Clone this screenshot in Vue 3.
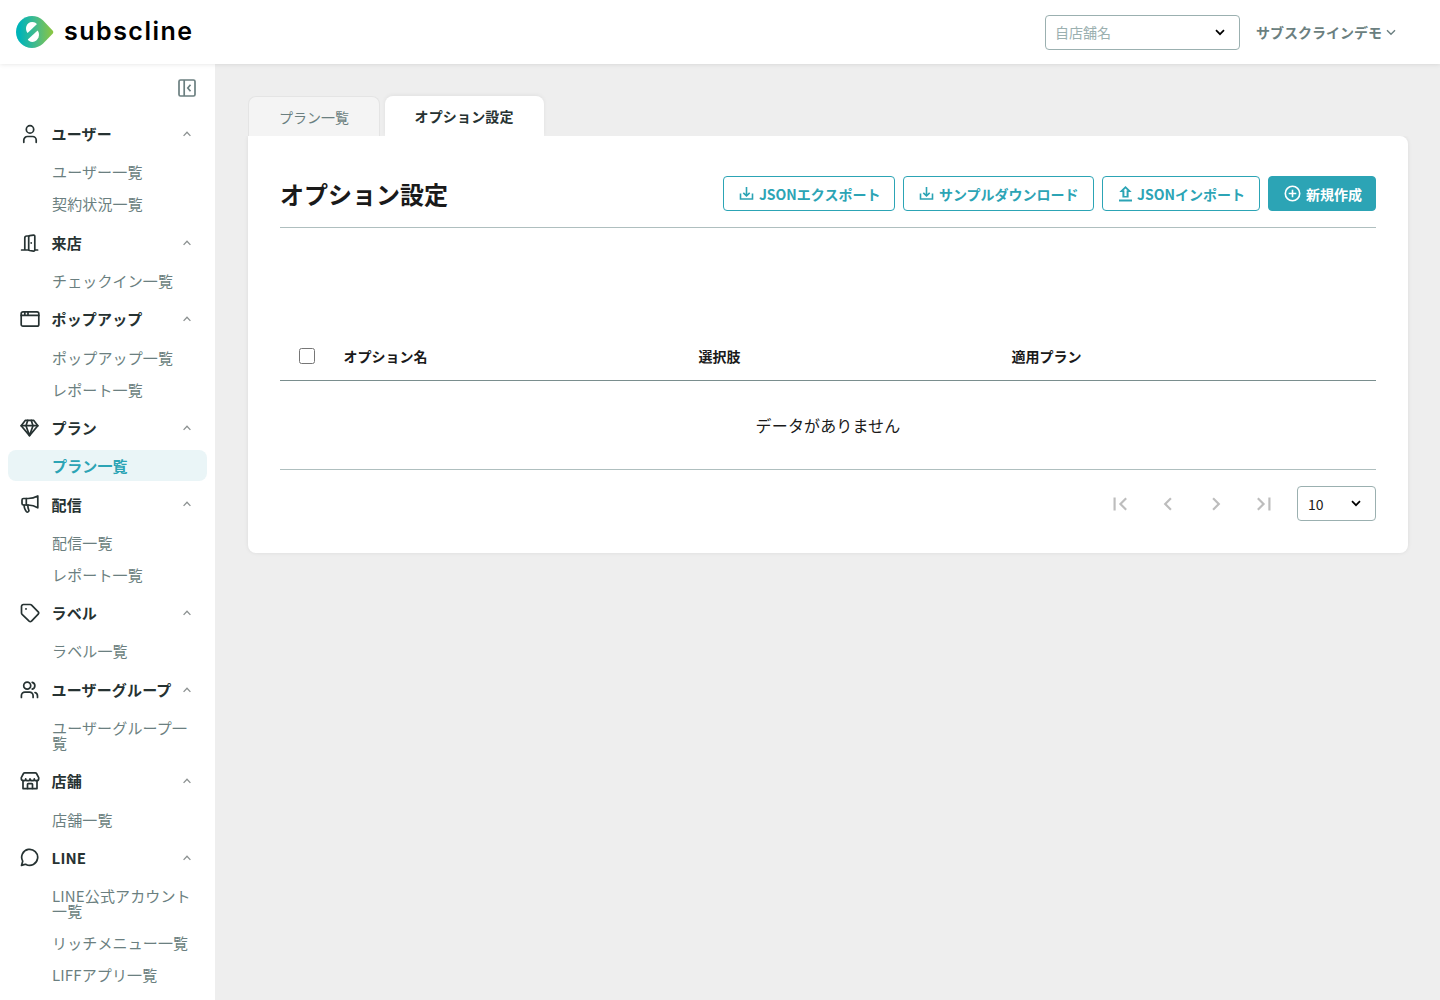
<template>
  <div class="app">
    <header class="header">
      <div class="logo">
        <svg class="logo-mark" width="38" height="32" viewBox="0 0 38 32">
          <defs>
            <linearGradient id="logoGradient" x1="0" y1="0" x2="1" y2="0">
              <stop offset="0.1" stop-color="#00b4b8" />
              <stop offset="0.55" stop-color="#48bb88" />
              <stop offset="1" stop-color="#8cc63f" />
            </linearGradient>
          </defs>
          <path
            d="M16 0C7.2 0 0 7.2 0 16s7.2 16 16 16c4.2 0 8-1.6 10.900-4.200L36.600 17.700c.9-1 .9-2.300 0-3.300L26.900 4.200C24 1.600 20.200 0 16 0z"
            fill="url(#logoGradient)"
          />
          <path d="M11.600 16.900C8.400 13.400 10 6 16.200 6C18.800 6 20.600 7.200 20.800 8.200z" fill="#fff" />
          <path d="M21.600 14.600C24.600 18 22.600 25.900 16.500 25.900C13.900 25.900 12 24.600 11.800 23.500z" fill="#fff" />
        </svg>
        <span class="logo-text">subscline</span>
      </div>
      <div class="header-right">
        <div class="select store-select">
          <span>自店舗名</span>
          <svg width="10" height="7" viewBox="0 0 10 7"><path d="M1 1.200l4 4 4-4" /></svg>
        </div>
        <div class="account">
          <span>サブスクラインデモ</span>
          <svg width="10" height="7" viewBox="0 0 10 7"><path d="M1 1.200l4 4 4-4" /></svg>
        </div>
      </div>
    </header>

    <div class="body">
      <aside class="sidebar">
        <div class="collapse">
          <svg width="18" height="18" viewBox="0 0 18 18">
            <rect x="1" y="1" width="16" height="16" rx="1.500" />
            <path d="M6.200 1v16M12.500 5.800L9.800 9l2.700 3.200" />
          </svg>
        </div>
        <nav>
          <div v-for="group in menus" :key="group.title" class="group">
            <div class="group-title">
              <svg class="group-icon" width="20" height="20" viewBox="0 0 20 20">
                <path v-for="(d, idx) in group.icon" :key="idx" :d="d" />
              </svg>
              <span>{{ group.title }}</span>
              <svg class="chevron" width="8" height="6" viewBox="0 0 8 6"><path d="M.6 4.900L4 1.300l3.400 3.600" /></svg>
            </div>
            <a
              v-for="item in group.items"
              :key="item"
              :class="['group-item', { active: item === current }]"
            >{{ item }}</a>
          </div>
        </nav>
      </aside>

      <main class="main">
        <div class="tabs">
          <div class="tab">プラン一覧</div>
          <div class="tab tab-active">オプション設定</div>
        </div>
        <section class="card">
          <div class="card-head">
            <h1>オプション設定</h1>
            <div class="actions">
              <button class="btn">
                <svg width="18" height="18" viewBox="0 0 18 18"><path :d="downloadIcon" /></svg>
                JSONエクスポート
              </button>
              <button class="btn">
                <svg width="18" height="18" viewBox="0 0 18 18"><path :d="downloadIcon" /></svg>
                サンプルダウンロード
              </button>
              <button class="btn">
                <svg class="upload" width="18" height="18" viewBox="0 0 18 18">
                  <path d="M9.500 1L15.700 7H12.600V12.500H6.400V7H3.300zM9.500 3.600L7.500 5.400H8.400V11H10.600V5.400H11.500zM3 14.500h13v2.100H3z" />
                </svg>
                JSONインポート
              </button>
              <button class="btn btn-primary">
                <svg width="20" height="18" viewBox="0 0 20 18">
                  <circle cx="10.500" cy="8.500" r="7.200" />
                  <path d="M10.500 4.700v7.600M6.700 8.500h7.600" />
                </svg>
                新規作成
              </button>
            </div>
          </div>

          <table>
            <thead>
              <tr>
                <th class="col-check"><input type="checkbox" /></th>
                <th class="col-name">オプション名</th>
                <th class="col-choice">選択肢</th>
                <th>適用プラン</th>
              </tr>
            </thead>
            <tbody>
              <tr>
                <td colspan="4" class="empty">データがありません</td>
              </tr>
            </tbody>
          </table>

          <div class="pager">
            <span v-for="(d, idx) in pagerIcons" :key="idx" class="pager-btn">
              <svg width="26" height="26" viewBox="0 0 24 24"><path :d="d" /></svg>
            </span>
            <div class="select page-size">
              <span>10</span>
              <svg width="10" height="7" viewBox="0 0 10 7"><path d="M1 1.200l4 4 4-4" /></svg>
            </div>
          </div>
        </section>
      </main>
    </div>
  </div>
</template>

<script setup>
import { ref } from 'vue'

const current = ref('プラン一覧')

const menus = [
  {
    title: 'ユーザー',
    icon: ['M10 1.700a3.700 3.700 0 1 0 0 7.400a3.700 3.700 0 0 0 0-7.400z', 'M3.800 18.300v-2.200a3.600 3.600 0 0 1 3.600-3.600h5.200a3.600 3.600 0 0 1 3.600 3.600v2.200'],
    items: ['ユーザー一覧', '契約状況一覧']
  },
  {
    title: '来店',
    icon: ['M1.600 17h7.100M4.800 17V5a2 2 0 0 1 2-2h2', 'M8.700 4v12.500q0 .8.800 1l4 .6q1.300.1 1.300-1V3.200q0-1.300-1.300-1.100l-3.800.5q-1 .2-1 1.400z', 'M14.800 17h2.800', 'M11.200 9.800v.3'],
    items: ['チェックイン一覧']
  },
  {
    title: 'ポップアップ',
    icon: ['M3 2.800h14a1.800 1.800 0 0 1 1.800 1.800v10.800a1.800 1.800 0 0 1-1.800 1.800H3a1.800 1.800 0 0 1-1.800-1.800V4.600A1.800 1.800 0 0 1 3 2.800z', 'M1.200 6.400h17.600M4.800 2.800v3.600M8 2.800v3.600'],
    items: ['ポップアップ一覧', 'レポート一覧']
  },
  {
    title: 'プラン',
    icon: ['M5.200 2.400h8.600l4 5.300-8.300 9.900-8.300-9.900z', 'M1.200 7.700h16.600', 'M7.700 2.400L6 7.700l3.500 9.900L13 7.700l-1.700-5.300'],
    items: ['プラン一覧']
  },
  {
    title: '配信',
    icon: ['M3.500 4.500h4.700C12 4.500 15 3.500 17.800 2v11.800C15 12 12 11 8.200 11H3.500a1.500 1.500 0 0 1-1.500-1.500V6a1.500 1.500 0 0 1 1.500-1.500z', 'M6.300 4.500V11', 'M4 11c.2 2.500 1 4.800 2.300 6.500q1 1 2 .2q1-.9.400-2C8 14.300 7.700 13 8 11'],
    items: ['配信一覧', 'レポート一覧']
  },
  {
    title: 'ラベル',
    icon: ['M1.500 3.400A1.900 1.900 0 0 1 3.400 1.500h6.800q.8 0 1.400.6l6.600 6.700q1 1.200 0 2.400l-6.700 6.900q-1.200 1-2.400 0L2.100 11.400q-.6-.6-.6-1.400z', 'M5.900 5.900h.2'],
    items: ['ラベル一覧']
  },
  {
    title: 'ユーザーグループ',
    icon: ['M7.200 2.200a3.500 3.500 0 1 0 0 7a3.500 3.500 0 0 0 0-7z', 'M1.400 17.500v-1.800a3.500 3.500 0 0 1 3.500-3.500h4.700a3.500 3.500 0 0 1 3.500 3.500v1.800', 'M12.200 2.300a3.500 3.500 0 0 1 0 6.800M15 12.500a3.500 3.500 0 0 1 2.500 3.400v1.600'],
    items: ['ユーザーグループ一覧']
  },
  {
    title: '店舗',
    icon: ['M4.700 1.800h10.600q.8 0 1.200.7l2.200 4.200v1q0 2-2.200 2q-2.200 0-2.200-1.800q0 1.800-2.100 1.800t-2.200-1.800q0 1.800-2.200 1.800T5.700 7.900q0 1.800-2.200 1.800q-2.200 0-2.200-2v-1l2.200-4.200q.4-.7 1.200-.7z', 'M3 9.700v7.900h14V9.700', 'M7.500 17.500v-4.200q0-.7.700-.7h3.600q.7 0 .7.700v4.200'],
    items: ['店舗一覧']
  },
  {
    title: 'LINE',
    icon: ['M1.500 17.400l1.200-4.200a8 8 0 1 1 3.300 3.200q-.6-.2-1.200 0z'],
    items: ['LINE公式アカウント一覧', 'リッチメニュー一覧', 'LIFFアプリ一覧']
  }
]

const downloadIcon = 'M3.500 8.500v5.500h12v-5.500M9.500 2v8.500M6.300 7.800l3.200 3 3.200-3'

// 最初・前・次・最後
const pagerIcons = [
  'M18.410 16.590L13.820 12l4.590-4.590L17 6l-6 6 6 6zM6 6h2v12H6z',
  'M15.410 7.410L14 6l-6 6 6 6 1.410-1.410L10.830 12z',
  'M10 6L8.590 7.410 13.170 12l-4.580 4.590L10 18l6-6z',
  'M5.590 7.410L10.180 12l-4.590 4.590L7 18l6-6-6-6zM16 6h2v12h-2z'
]
</script>

<style>
body {
  margin: 0;
  background: #eee;
}
</style>

<style scoped>
.app {
  height: 1000px;
  overflow: hidden;
  display: flex;
  flex-direction: column;
  font-family: "Noto Sans CJK JP", sans-serif;
  font-size: 14px;
  letter-spacing: 0.01em;
  color: #1a1a1a;
}

svg {
  flex: none;
  fill: none;
}

.header {
  position: relative;
  z-index: 1;
  flex: none;
  box-sizing: border-box;
  height: 64px;
  padding: 0 44px 0 16px;
  display: flex;
  align-items: center;
  justify-content: space-between;
  background: #fff;
  box-shadow: 0 0 5px rgba(0, 0, 0, 0.12);
}

.logo {
  display: flex;
  align-items: center;
  gap: 10px;
}

.logo-text {
  padding-bottom: 2px;
  font-family: Inter, sans-serif;
  font-size: 25px;
  font-weight: 600;
  line-height: 30px;
  letter-spacing: 1.5px;
  color: #000;
}

.header-right {
  display: flex;
  align-items: center;
  gap: 16px;
  letter-spacing: 0;
}

.select {
  box-sizing: border-box;
  height: 35px;
  padding: 0 14px 0 10px;
  display: flex;
  align-items: center;
  justify-content: space-between;
  border: 1px solid #9bb0b0;
  border-radius: 4px;
  background: #fff;
  line-height: 20px;
}

.select svg {
  stroke: #000;
  stroke-width: 1.7;
}

.store-select {
  width: 195px;
  padding-left: 9px;
  color: #9bb0b0;
}

.account {
  display: flex;
  align-items: center;
  gap: 4px;
  font-weight: 700;
  color: #6b7f80;
}

.account svg {
  stroke: #6b7f80;
  stroke-width: 1.4;
}

.body {
  flex: 1;
  display: flex;
  min-height: 0;
}

.sidebar {
  flex: none;
  width: 215px;
  background: #fff;
}

.collapse {
  display: flex;
  justify-content: flex-end;
  padding: 15px 19px 14.400px 0;
}

.collapse svg {
  stroke: #6b7f80;
  stroke-width: 1.7;
}

.group-title {
  height: 44.600px;
  padding: 0 24px 0 20px;
  display: flex;
  align-items: center;
  font-size: 15px;
  font-weight: 700;
  line-height: 15px;
  color: #263232;
}

.group-icon {
  margin: 0.600px 11.600px 0 0;
  stroke: #263232;
  stroke-width: 1.7;
  stroke-linecap: round;
  stroke-linejoin: round;
}

.chevron {
  margin-top: 0.600px;
  margin-left: auto;
  stroke: #8c9191;
  stroke-width: 1.3;
}

.group-item {
  display: block;
  margin: 0 8px 1px;
  padding: 8.500px 8px 7.500px 44px;
  border-radius: 8px;
  font-size: 15px;
  line-height: 15px;
  color: #6b7f80;
}

.group-item.active {
  background: #eaf5f7;
  font-weight: 700;
  color: #2ca4b5;
}

.main {
  flex: 1;
  padding: 32px 32px 0 33px;
}

.tabs {
  display: flex;
  align-items: flex-end;
  gap: 4.600px;
  height: 40px;
}

.tab {
  box-sizing: border-box;
  height: 40px;
  padding: 0 30px;
  border: 1px solid #e4e4e4;
  border-bottom: 0;
  border-radius: 8px 8px 0 0;
  background: #f4f4f4;
  line-height: 41px;
  letter-spacing: 0;
  color: #6b7f80;
}

.tab-active {
  border: 0;
  background: #fff;
  line-height: 40px;
  letter-spacing: 0.01em;
  font-weight: 700;
  color: #263232;
  box-shadow: 0 -1px 4px rgba(0, 0, 0, 0.06);
}

.card {
  box-sizing: border-box;
  height: 417px;
  padding: 40px 32px 0;
  border-radius: 0 8px 8px 8px;
  background: #fff;
  box-shadow: 0 0 4px rgba(0, 0, 0, 0.08);
  clip-path: inset(0 -8px -8px -8px);
}

.card-head {
  display: flex;
  align-items: center;
  justify-content: space-between;
  padding-bottom: 16px;
  border-bottom: 1px solid #afbfbf;
}

h1 {
  margin: 0;
  font-size: 24px;
  line-height: 35px;
  letter-spacing: 0;
}

.actions {
  display: flex;
  gap: 8px;
}

.btn {
  height: 35px;
  padding: 0 14px 0 13px;
  display: flex;
  align-items: center;
  gap: 3.500px;
  border: 1px solid #2ca4b5;
  border-radius: 4px;
  background: #fff;
  font: inherit;
  font-weight: 700;
  letter-spacing: 0;
  white-space: nowrap;
  color: #2ca4b5;
}

.btn svg {
  stroke: currentColor;
  stroke-width: 1.6;
}

.btn .upload {
  fill: currentColor;
  fill-rule: evenodd;
  stroke: none;
}

.btn-primary {
  padding: 0 13px;
  gap: 4px;
  background: #2ca4b5;
  color: #fff;
}

table {
  width: 100%;
  margin-top: 104px;
  border-collapse: collapse;
  table-layout: fixed;
}

th {
  height: 48px;
  padding: 0;
  border-bottom: 1px solid #7a8e8e;
  text-align: left;
  letter-spacing: 0;
}

.col-check {
  width: 63.600px;
}

.col-name {
  width: 355px;
}

.col-choice {
  width: 313px;
}

input {
  display: block;
  width: 16px;
  height: 16px;
  margin: 0 0 0 19px;
}

.empty {
  height: 88px;
  padding: 0;
  border-bottom: 1px solid #afbfbf;
  text-align: center;
  font-size: 16px;
}

.pager {
  display: flex;
  align-items: center;
  justify-content: flex-end;
  margin-top: 16px;
}

.pager-btn {
  width: 48px;
  display: flex;
  justify-content: center;
}

.pager-btn svg {
  fill: #bdbdbd;
}

.page-size {
  width: 79px;
  margin-left: 9px;
  letter-spacing: 0;
}
</style>
